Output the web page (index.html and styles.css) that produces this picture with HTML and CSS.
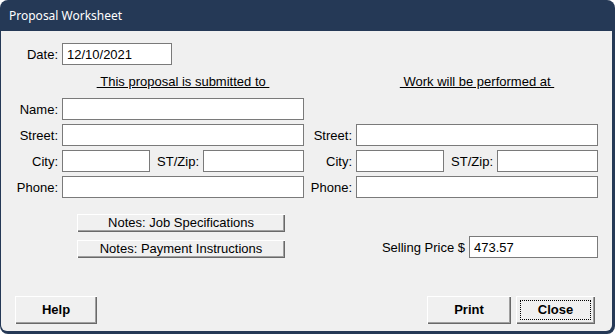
FILE: index.html
```html
<!DOCTYPE html>
<html>
<head>
<meta charset="utf-8">
<title>Proposal Worksheet</title>
<link rel="stylesheet" href="styles.css">
</head>
<body>
<div class="window">
  <div class="titlebar">Proposal Worksheet</div>
  <div class="client">
    <div class="form">
      <span class="lbl">Date:</span>
      <div class="date-cell"><input class="inp date" type="text" value="12/10/2021"></div>
      <span></span><span></span>

      <span></span>
      <div class="head"><span class="ul">&nbsp;This proposal is submitted to&nbsp;</span></div>
      <span></span>
      <div class="head"><span class="ul">&nbsp;Work will be performed at&nbsp;</span></div>

      <span class="lbl">Name:</span>
      <input class="inp" type="text" value="">
      <span></span><span></span>

      <span class="lbl">Street:</span>
      <input class="inp" type="text" value="">
      <span class="lbl">Street:</span>
      <input class="inp" type="text" value="">

      <span class="lbl">City:</span>
      <div class="split">
        <input class="inp city" type="text" value="">
        <span class="lbl grow">ST/Zip:</span>
        <input class="inp zip" type="text" value="">
      </div>
      <span class="lbl">City:</span>
      <div class="split">
        <input class="inp city" type="text" value="">
        <span class="lbl grow">ST/Zip:</span>
        <input class="inp zip" type="text" value="">
      </div>

      <span class="lbl">Phone:</span>
      <input class="inp" type="text" value="">
      <span class="lbl">Phone:</span>
      <input class="inp" type="text" value="">
    </div>

    <div class="lower">
      <div class="notes">
        <button class="btn note">Notes: Job Specifications</button>
        <button class="btn note">Notes: Payment Instructions</button>
      </div>
      <div class="price">
        <span>Selling Price $</span>
        <input class="inp price-inp" type="text" value="473.57">
      </div>
    </div>

    <div class="footer">
      <button class="btn big help">Help</button>
      <div class="footer-right">
        <button class="btn big print">Print</button>
        <button class="btn big close">Close</button>
      </div>
    </div>
  </div>
</div>
</body>
</html>
```

FILE: styles.css
```css
html, body {
  margin: 0;
  padding: 0;
  background: #ffffff;
}

.window {
  width: 615px;
  height: 334px;
  background: #253956;
  border-radius: 8px;
  display: flex;
  flex-direction: column;
  overflow: hidden;
}

.titlebar {
  height: 31px;
  flex: 0 0 31px;
  display: flex;
  align-items: center;
  padding-left: 9px;
  color: #ffffff;
  font-family: "Noto Sans", "Open Sans", sans-serif;
  font-size: 12px;
}

.client {
  flex: 1;
  margin: 0 3px 3px 1px;
  background: #f0f0f0;
  border-radius: 0 0 6px 6px;
  display: flex;
  flex-direction: column;
  padding: 12px 14px 7px 9px;
  font-family: "Liberation Sans", Arial, sans-serif;
  font-size: 13px;
  color: #000000;
}

.form {
  display: grid;
  grid-template-columns: 52px 242px 52px 242px;
  grid-template-rows: 22px 25px 22px 22px 22px 22px;
  row-gap: 4px;
  align-items: center;
}

.lbl {
  text-align: right;
  padding-right: 4px;
  white-space: nowrap;
}

.head {
  text-align: center;
  line-height: 15px;
}

.ul {
  text-decoration: underline;
  white-space: nowrap;
}

.inp {
  box-sizing: border-box;
  height: 22px;
  width: 100%;
  margin: 0;
  padding: 0 4px;
  border: 1px solid #7a7a7a;
  border-radius: 0;
  background: #ffffff;
  font-family: "Liberation Sans", Arial, sans-serif;
  font-size: 13px;
  color: #000000;
  outline: none;
}

.date-cell {
  display: flex;
}

.inp.date {
  width: 110px;
}

.split {
  display: flex;
  align-items: center;
}

.inp.city {
  width: 88px;
  flex: 0 0 88px;
}

.inp.zip {
  width: 101px;
  flex: 0 0 101px;
}

.grow {
  flex: 1;
}

.lower {
  display: flex;
  align-items: flex-end;
  justify-content: space-between;
  margin-top: 16px;
  padding-left: 67px;
}

.notes {
  display: flex;
  flex-direction: column;
  gap: 8px;
}

.price {
  display: flex;
  align-items: center;
  gap: 4px;
}

.inp.price-inp {
  width: 129px;
  padding-left: 4px;
}

.btn {
  box-sizing: border-box;
  margin: 0;
  padding: 0;
  border: none;
  border-radius: 0;
  background: #f0f0f0;
  box-shadow: inset 1px 1px #ffffff, inset -1px -1px #696969, inset -2px -2px #a0a0a0;
  font-family: "Liberation Sans", Arial, sans-serif;
  font-size: 13px;
  color: #000000;
  line-height: 16px;
}

.btn.note {
  width: 208px;
  height: 18px;
}

.btn.big {
  height: 28px;
  font-weight: bold;
}

.footer {
  margin-top: auto;
  display: flex;
  justify-content: space-between;
  align-items: flex-end;
  padding-left: 5px;
  padding-right: 3px;
}

.footer-right {
  display: flex;
  gap: 5px;
}

.help {
  width: 82px;
}

.print {
  width: 84px;
}

.close {
  width: 79px;
  outline: 1px dotted #000000;
  outline-offset: -5px;
}
```
